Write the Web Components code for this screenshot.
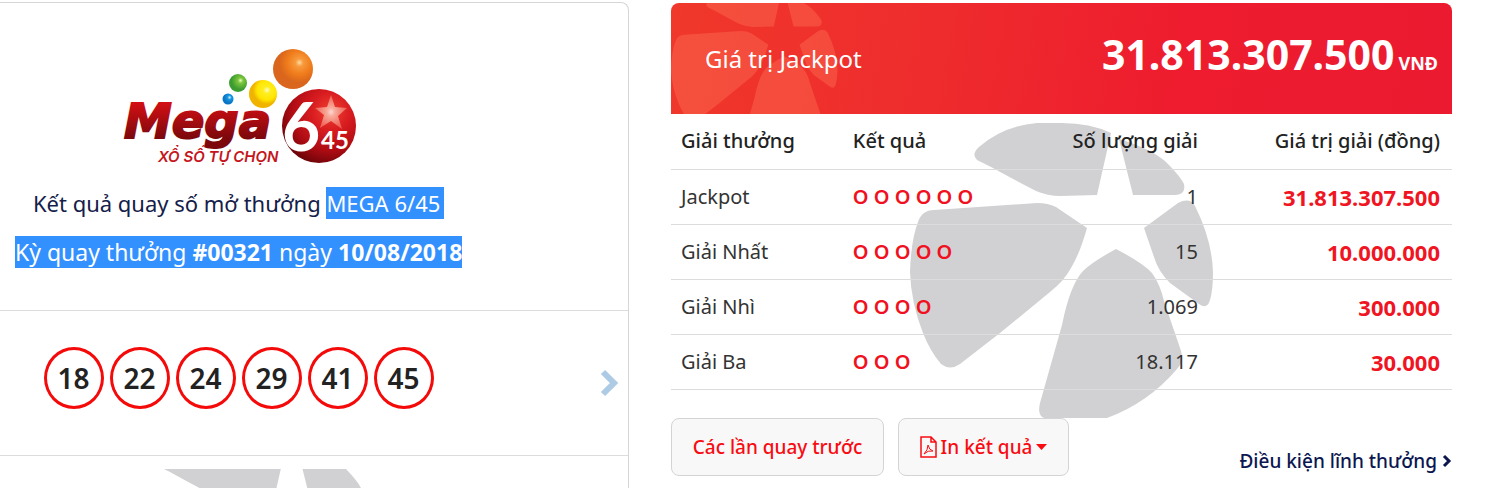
<!DOCTYPE html>
<html lang="vi">
<head>
<meta charset="utf-8">
<title>Kết quả Mega 6/45</title>
<style>
  html, body { margin: 0; height: 100%; background: #fff; }
  body { font-family: "Noto Sans", "Open Sans", sans-serif; color: #333; overflow: hidden; }
</style>
</head>
<body>
<results-page></results-page>

<script>
const define = (name, html, setup) => customElements.define(name, class extends HTMLElement {
  constructor() {
    super();
    const t = document.createElement('template');
    t.innerHTML = html;
    this.attachShadow({ mode: 'open' }).append(t.content.cloneNode(true));
  }
  connectedCallback() { if (setup) setup(this, this.shadowRoot); }
});

define('star-mark', `
<style>
  :host { display: block; width: 304px; color: #d1d1d3; pointer-events: none; }
  svg { display: block; width: 100%; height: auto; fill: currentColor; }
</style>
<svg viewBox="910 123 304 295" aria-hidden="true">
  <path d="M977 160Q971 154 979 147Q1003 126 1037 123H1062Q1090 123 1111 133L1097 195L1060 196Q1048 196 1036 191Q1022 184 993 168Z"/>
  <path d="M1119 139Q1150 148 1166 162Q1180 176 1184 184Q1186 194 1176 195H1133Z"/>
  <path d="M934 210L1037 203Q1048 203 1056 207L1087 228Q1080 253 1071 268Q1064 281 1050 292L1000 333L960 364Q950 371 941 364Q930 351 923 333Q911 303 910 272Q911 240 918 222Q922 210 934 210Z"/>
  <path d="M1144 228L1178 203Q1190 197 1195 206Q1212 240 1213 272Q1213 290 1210 300Q1207 310 1199 304L1170 283Q1158 271 1154 257Z"/>
  <path d="M1116 249Q1143 263 1152 273Q1160 284 1164 301L1181 351Q1184 362 1177 369Q1148 403 1107 418H1044Q1037 415 1040 403L1062 325Q1070 285 1083 271Q1092 262 1116 249Z"/>
</svg>`);

define('mega-logo', `
<style>
  :host { display: block; }
  svg { display: block; width: 236px; height: 118px; overflow: visible; }
</style>
<svg viewBox="120 47 236 118" role="img" aria-label="Mega 6/45">
  <defs>
    <linearGradient id="m" x1="0" y1="0" x2="0" y2="1"><stop offset=".2" stop-color="#cf0f14"/><stop offset=".8" stop-color="#7d080c"/></linearGradient>
    <radialGradient id="o" cx=".66" cy=".34"><stop offset="0" stop-color="#ffd9a0"/><stop offset=".2" stop-color="#f79a3c"/><stop offset=".6" stop-color="#f07c1c"/><stop offset="1" stop-color="#d9661c"/></radialGradient>
    <radialGradient id="y" cx=".64" cy=".36"><stop offset="0" stop-color="#fffbd0"/><stop offset=".25" stop-color="#ffee20"/><stop offset=".7" stop-color="#ffe500"/><stop offset="1" stop-color="#f0b400"/></radialGradient>
    <radialGradient id="g" cx=".64" cy=".36"><stop offset="0" stop-color="#eaffc0"/><stop offset=".3" stop-color="#7cc63c"/><stop offset="1" stop-color="#3c9c30"/></radialGradient>
    <radialGradient id="b" cx=".64" cy=".36"><stop offset="0" stop-color="#c8f0ff"/><stop offset=".4" stop-color="#1496e0"/><stop offset="1" stop-color="#0c74c4"/></radialGradient>
    <radialGradient id="r" cx=".66" cy=".3" r=".75"><stop offset="0" stop-color="#f04030"/><stop offset=".35" stop-color="#d81c20"/><stop offset=".7" stop-color="#b00c14"/><stop offset="1" stop-color="#6c0408"/></radialGradient>
    <radialGradient id="s" cx=".5" cy=".5" r=".5"><stop offset="0" stop-color="#fff"/><stop offset=".25" stop-color="#fcc8b8"/><stop offset="1" stop-color="#f07060"/></radialGradient>
  </defs>
  <circle cx="292" cy="69" r="20" fill="url(#o)"/>
  <circle cx="262" cy="94" r="14" fill="url(#y)"/>
  <circle cx="237" cy="83" r="9" fill="url(#g)"/>
  <circle cx="227" cy="99" r="5.500" fill="url(#b)"/>
  <circle cx="318" cy="126" r="37" fill="url(#r)"/>
  <path d="M330 95L334 107L346 108L337 116L341 129L330 121L319 128L323 115L314 108L326 107Z" fill="url(#s)" opacity=".8"/>
  <text x="123" y="138" font-family="DejaVu Sans" font-weight="700" font-style="italic" font-size="48" fill="url(#m)" stroke="url(#m)" stroke-width="2">Mega</text>
  <text x="281" y="151" font-family="Lato" font-weight="700" font-size="66" fill="#fff">6</text>
  <text x="320" y="149" font-family="Lato" font-weight="700" font-size="24" fill="#fff">45</text>
  <text x="157" y="162" font-family="Inter" font-weight="600" font-style="italic" font-size="15" fill="#c4161c">XỔ SỐ TỰ CHỌN</text>
</svg>`);

define('lotto-ball', `
<style>
  :host { display: grid; place-items: center; box-sizing: border-box; width: 60px; height: 62px;
    border: 3px solid #f50a0a; border-radius: 50%; font-size: 28px; font-weight: 600; line-height: 36px; color: #222; }
</style>
<slot></slot>`);

define('draw-panel', `
<style>
  :host { display: flex; flex-direction: column; box-sizing: border-box; min-height: 0;
    border: 1px solid #d6d6d6; border-width: 1px 1px 0 0; border-radius: 0 8px 0 0; }
  .column { width: 76%; display: flex; flex-direction: column; align-items: center; }
  .head { box-sizing: border-box; height: 307px; padding-top: 44px; }
  h2, h3 { margin: 0; line-height: 32px; font-weight: 400; white-space: nowrap; color: #14204a; }
  h2 { margin-top: 22px; font-size: 22px; }
  h3 { margin-top: 17px; font-size: 23px; }
  mark { display: inline-block; line-height: 32px; background: #3390ff; color: #fff; }
  h2 mark { padding-right: 4px; }
  .numbers { display: flex; align-items: center; justify-content: space-between; height: 144px;
    border: 1px solid #dcdcdc; border-width: 1px 0; }
  .balls { display: flex; justify-content: center; gap: 6px; width: 76%; margin-bottom: 10px; }
  a { display: block; padding-right: 9px; }
  a svg { display: block; width: 20px; height: 30px; }
  .foot { flex: 1; min-height: 0; overflow: hidden; margin-top: 13px; }
  star-mark { margin-top: -42px; }
</style>
<section class="column head">
  <mega-logo></mega-logo>
  <h2>Kết quả quay số mở thưởng <mark>MEGA 6/45</mark></h2>
  <h3><mark>Kỳ quay thưởng <b>#00321</b> ngày <b>10/08/2018</b></mark></h3>
</section>
<section class="numbers">
  <div class="balls">
    <lotto-ball>18</lotto-ball><lotto-ball>22</lotto-ball><lotto-ball>24</lotto-ball>
    <lotto-ball>29</lotto-ball><lotto-ball>41</lotto-ball><lotto-ball>45</lotto-ball>
  </div>
  <a href="#next" aria-label="Kỳ sau"><svg viewBox="0 0 20 30"><path d="M4 4L15 15L4 26" fill="none" stroke="#aecbe6" stroke-width="6"/></svg></a>
</section>
<section class="column foot"><star-mark></star-mark></section>`);

define('jackpot-banner', `
<style>
  :host { display: flex; align-items: center; justify-content: space-between; box-sizing: border-box; height: 111px;
    padding: 0 14px 0 34px; position: relative; overflow: hidden; border-radius: 8px 8px 0 0; color: #fff;
    background: linear-gradient(100deg, #f0392c 0%, #ee2b2d 35%, #ee1c2e 65%, #ec1a30 100%); }
  star-mark { position: absolute; left: 0; top: -16px; width: 167px; color: #ff7a5c; opacity: .36; }
  h2 { margin: 0; position: relative; font-size: 24px; font-weight: 400; }
  p { margin: 0; font-size: 41px; font-weight: 700; line-height: 56px; }
  small { font-size: 18px; margin-left: 4px; }
</style>
<star-mark></star-mark>
<h2><slot name="label"></slot></h2>
<p><slot></slot><small>VNĐ</small></p>`);

define('prize-table', `
<style>
  :host { display: block; position: relative; padding-bottom: 28px; }
  star-mark { position: absolute; left: calc(50% - 152px); bottom: 0; }
  table { position: relative; width: 100%; table-layout: fixed; border-collapse: collapse; font-size: 20px; line-height: 28px; white-space: nowrap; }
  th, td { box-sizing: border-box; height: 55px; padding: 0 12px 0 10px; text-align: left; border-bottom: 1px solid #dcdcdc; color: #333; }
  th { font-weight: 500; color: #222; }
  .a { width: 22%; } .b { width: 24%; } .c { width: 23%; }
  th:nth-child(n+3), td:nth-child(n+3) { text-align: right; }
  td:nth-child(2) { color: #f01020; font-weight: 600; }
  td:last-child { color: #f01522; font-weight: 700; font-size: 22px; }
</style>
<star-mark></star-mark>
<table>
  <thead><tr><th class="a">Giải thưởng</th><th class="b">Kết quả</th><th class="c">Số lượng giải</th><th>Giá trị giải (đồng)</th></tr></thead>
  <tbody></tbody>
</table>`, (el, root) => {
  const rows = [['Jackpot', 6, '1', '31.813.307.500'], ['Giải Nhất', 5, '15', '10.000.000'],
                ['Giải Nhì', 4, '1.069', '300.000'], ['Giải Ba', 3, '18.117', '30.000']];
  root.querySelector('tbody').innerHTML = rows.map(([name, n, count, value]) =>
    `<tr><td>${name}</td><td>${Array(n).fill('O').join(' ')}</td><td>${count}</td><td>${value}</td></tr>`).join('');
});

define('action-button', `
<style>
  :host { display: block; }
  button { display: flex; align-items: center; justify-content: center; gap: 4px; box-sizing: border-box; height: 58px;
    width: 100%; padding: 0 18px; border: 1px solid #d4d4d4; border-radius: 8px; background: #f8f8f8; color: #f80c12;
    font: 500 19px/28px "Noto Sans", "Open Sans", sans-serif; white-space: nowrap; }
</style>
<button type="button"><slot></slot></button>`);

define('results-panel', `
<style>
  :host { display: block; }
  .actions { display: flex; gap: 14px; }
  .prev { width: 213px; }
  .print { width: 171px; }
  a { display: flex; align-items: center; gap: 5px; margin: 28px 0 0 auto; font-size: 19px; line-height: 28px; font-weight: 500;
    color: #0c1650; text-decoration: none; white-space: nowrap; }
  svg { display: block; flex: none; }
</style>
<jackpot-banner><span slot="label">Giá trị Jackpot</span>31.813.307.500</jackpot-banner>
<prize-table></prize-table>
<div class="actions">
  <action-button class="prev">Các lần quay trước</action-button>
  <action-button class="print"><svg width="17" height="22" viewBox="0 0 17 22" fill="none" stroke="#f80c12" stroke-width="1.500"><path d="M1 1H11L16 6V21H1ZM11 1V6H16"/><path d="M4 18Q8 14 8 9Q9 14 13 15Q8 14 4 18Z" stroke-width="1"/></svg>In kết quả<svg width="11" height="6" viewBox="0 0 11 6"><path d="M0 0H11L5.500 6Z" fill="#f80c12"/></svg></action-button>
  <a href="#conditions">Điều kiện lĩnh thưởng<svg width="10" height="14" viewBox="0 0 10 14"><path d="M2 2L7 7L2 12" fill="none" stroke="#0c1650" stroke-width="3"/></svg></a>
</div>`);

define('results-page', `
<style>
  :host { display: grid; grid-template-columns: minmax(0, 629fr) minmax(0, 781fr); gap: 42px; box-sizing: border-box;
    height: 100vh; padding: 2px 48px 0 0; }
  results-panel { padding-top: 1px; }
</style>
<draw-panel></draw-panel>
<results-panel></results-panel>`);
</script>
</body>
</html>
